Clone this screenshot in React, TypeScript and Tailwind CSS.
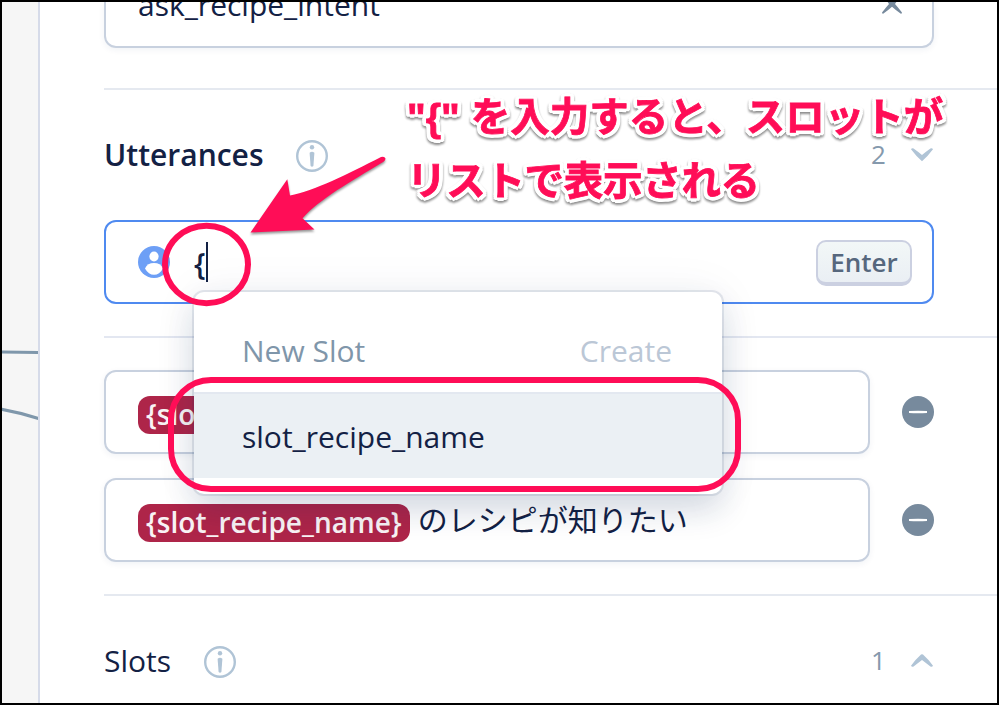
import React from "react";

function InfoIcon() {
  return (
    <svg width="32" height="32" viewBox="0 0 32 32" className="shrink-0">
      <circle cx="16" cy="16" r="14.8" fill="none" stroke="#b0c4d6" strokeWidth="2.4" />
      <circle cx="16" cy="7.3" r="2.2" fill="#b0c4d6" />
      <path d="M13.6 12.8Q16 10.8 18.4 12.8L17.4 26Q16 27.4 14.6 26Z" fill="#b0c4d6" />
    </svg>
  );
}

function MinusButton() {
  return (
    <svg width="32" height="32" viewBox="0 0 32 32" className="shrink-0">
      <circle cx="16" cy="16" r="16" fill="#778a9d" />
      <path d="M7 15Q16 14.4 25 15V17Q16 17.6 7 17Z" fill="#fff" />
    </svg>
  );
}

function SectionHeader({
  title,
  count,
  open,
  strong,
}: {
  title: string;
  count: number;
  open: boolean;
  strong?: boolean;
}) {
  return (
    <div className="flex h-[130px] w-[830px] shrink-0 items-center pt-0.5">
      <h2
        className={
          strong
            ? "w-[192px] pb-[3px] text-[30px] font-semibold"
            : "w-[100px] pb-1 text-[30px]"
        }
      >
        {title}
      </h2>
      <InfoIcon />
      <span className="ml-auto w-[30px] pb-1 text-[26px] text-[#8599ad]">{count}</span>
      <svg width="24" height="16" viewBox="0 0 24 16" className="mb-0.5 ml-[9px]">
        {open ? (
          <path d="M1 2.2Q1.8 .6 3.6 1.4Q8 4.5 12 8Q16 4.500 20.400 1.400Q22.200 .6 23 2.200Q18 9 12 14.200Q6 9 1 2.200Z" fill="#b0c4d6" />
        ) : (
          <path d="M1 12.8Q1.8 14.4 3.6 13.6Q8 10 12 7Q16 10 20.400 13.600Q22.200 14.400 23 12.800Q18 6 13 1.600Q12 .8 11 1.600Q6 6 1 12.800Z" fill="#b0c4d6" />
        )}
      </svg>
    </div>
  );
}

function SlotTag() {
  return (
    <span className="flex h-[38px] items-center rounded-[12px] bg-[#ae2549] px-2 pb-[3px] text-[28px] leading-none font-semibold tracking-[0.02px] text-[#f9f3f5]">
      {"{slot_recipe_name}"}
    </span>
  );
}

function UtteranceRow({ text }: { text: string }) {
  return (
    <div className="flex w-[830px] items-center justify-between">
      <div className="flex h-[84px] w-[766px] items-center rounded-[12px] border-2 border-[#c8d1df] pt-1.5 pl-8 shadow-[0_2px_6px_rgba(17,49,96,0.06)]">
        <SlotTag />
        <span className="ml-2 pb-[7px] text-[30px] whitespace-nowrap">{text}</span>
      </div>
      <MinusButton />
    </div>
  );
}

export default function App() {
  return (
    <div className="relative flex h-[705px] w-[999px] overflow-hidden border-2 border-black bg-white font-['Open_Sans','Noto_Sans_CJK_JP',sans-serif] text-[#132144]">
      <aside className="w-[38px] shrink-0 border-r-2 border-[#d6dbe9] bg-[#f6f6f6]">
        <svg width="36" height="701" viewBox="2 2 36 701" fill="none" stroke="#7f97ab" strokeWidth="3">
          <path d="M0 352L40 352.5" />
          <path d="M0 409Q20 412.5 40 419" />
        </svg>
      </aside>

      <main className="flex grow flex-col pl-16">
        <div className="flex h-[46px] w-[830px] shrink-0 items-start overflow-hidden rounded-b-[12px] border-2 border-t-0 border-[#c8d1df] pr-7 pl-8 shadow-[0_2px_6px_rgba(17,49,96,0.06)]">
          <span className="-mt-[19px] text-[30px] leading-[44px]">ask_recipe_intent</span>
          <svg width="24" height="24" viewBox="0 0 24 24" className="-mt-[9px] ml-auto">
            <path d="M2 1.500Q7 4.500 12 8.500Q17 4.500 22 1.500Q18 6.500 15 11Q18.500 15 22 19.500L21.200 21Q16 17.500 12 13.800Q8 17.500 2.800 21L2 19.500Q5.500 15 9 11Q6 6.500 2 1.500Z" fill="#778a9d" />
          </svg>
        </div>

        <div className="mt-10 h-0.5 shrink-0 bg-[#e5e9f0]" />
        <SectionHeader title="Utterances" count={2} open strong />

        <div className="flex h-[84px] w-[830px] shrink-0 items-center rounded-[12px] border-2 border-[#4f8af0] pr-5 pl-8">
          <svg width="32" height="32" viewBox="0 0 32 32">
            <circle cx="16" cy="16" r="16" fill="#6d9ff6" />
            <ellipse cx="16" cy="10.5" rx="4.6" ry="5" fill="#fff" />
            <path d="M7 22.4Q9.5 17 16 17Q22.500 17 25 22.400Q21.500 28.800 16 28.800Q10.500 28.800 7 22.400Z" fill="#fff" />
          </svg>
          <span className="ml-6 pt-0.5 text-[30px] font-semibold">{"{"}</span>
          <span className="h-10 w-0.5 bg-[#132144]" />
          <div className="mt-0.5 ml-auto flex h-[46px] w-[96px] items-center justify-center rounded-[10px] border-2 border-b-4 border-[#cbd0e1] bg-linear-to-b from-[#f2f7f7] to-[#eaeff4] text-[26px] font-semibold text-[#56677d]">
            Enter
          </div>
        </div>

        <div className="mt-8 h-0.5 shrink-0 bg-[#e3e7f1]" />
        <div className="mt-8 flex shrink-0 flex-col gap-6">
          <UtteranceRow text="" />
          <UtteranceRow text="のレシピが知りたい" />
        </div>

        <div className="mt-8 h-0.5 shrink-0 bg-[#e5e9f0]" />
        <SectionHeader title="Slots" count={1} open={false} />
      </main>

      <div className="absolute top-[290px] left-[192px] flex h-[202px] w-[528px] flex-col rounded-[10px] bg-white shadow-[0_0_0_2px_rgba(17,49,96,0.1),0_16px_32px_rgba(17,49,96,0.16),0_0_48px_rgba(17,49,96,0.06)]">
        <div className="flex h-[100px] items-center justify-between pt-[17px] pr-[50px] pl-[48px] text-[30px]">
          <span className="text-[#7f96aa]">New Slot</span>
          <span className="text-[#bbc7d6]">Create</span>
        </div>
        <div className="flex h-[86px] items-center border-t-2 border-[#e3e8f0] bg-[#ebf0f4] pl-[48px] text-[30px]">
          slot_recipe_name
        </div>
      </div>

      <svg className="absolute -top-0.5 -left-0.5" width="999" height="705" viewBox="0 0 999 705" fill="none">
        <rect x="165" y="225.700" width="83" height="77.500" rx="41.500" ry="38.700" stroke="#ff0d57" strokeWidth="6" />
        <rect x="171" y="380" width="567" height="109" rx="40" stroke="#ff0d57" strokeWidth="6" />
        <path
          d="M250.500 232.500L287.300 179.300L290 195.500C314 191 348 174 381 157Q384.500 155.800 385.500 158.500Q385.500 160.500 383.500 161.800C350 182 320 199 302.500 218.300L314.500 229.500Z"
          fill="#ff0d57"
          className="drop-shadow-[0_2px_1px_rgba(0,0,0,0.4)]"
        />
      </svg>

      <p className="absolute top-[83px] left-[405px] font-['Liberation_Sans','Noto_Sans_CJK_JP',sans-serif] text-[39.5px] leading-[64px] font-bold whitespace-nowrap text-[#ff0d57] drop-shadow-[0_2px_1px_rgba(0,0,0,0.45)] [-webkit-text-stroke:0.8px_#ff0d57] [text-shadow:4px_0_white,-4px_0_white,0_4px_white,0_-4px_white,3px_3px_white,-3px_3px_white,3px_-3px_white,-3px_-3px_white,4px_2px_white,-4px_2px_white,4px_-2px_white,-4px_-2px_white]">
        {'"{" を入力すると、スロットが'}
        <br />
        <span className="tracking-[-0.3px]">リストで表示される</span>
      </p>
    </div>
  );
}
